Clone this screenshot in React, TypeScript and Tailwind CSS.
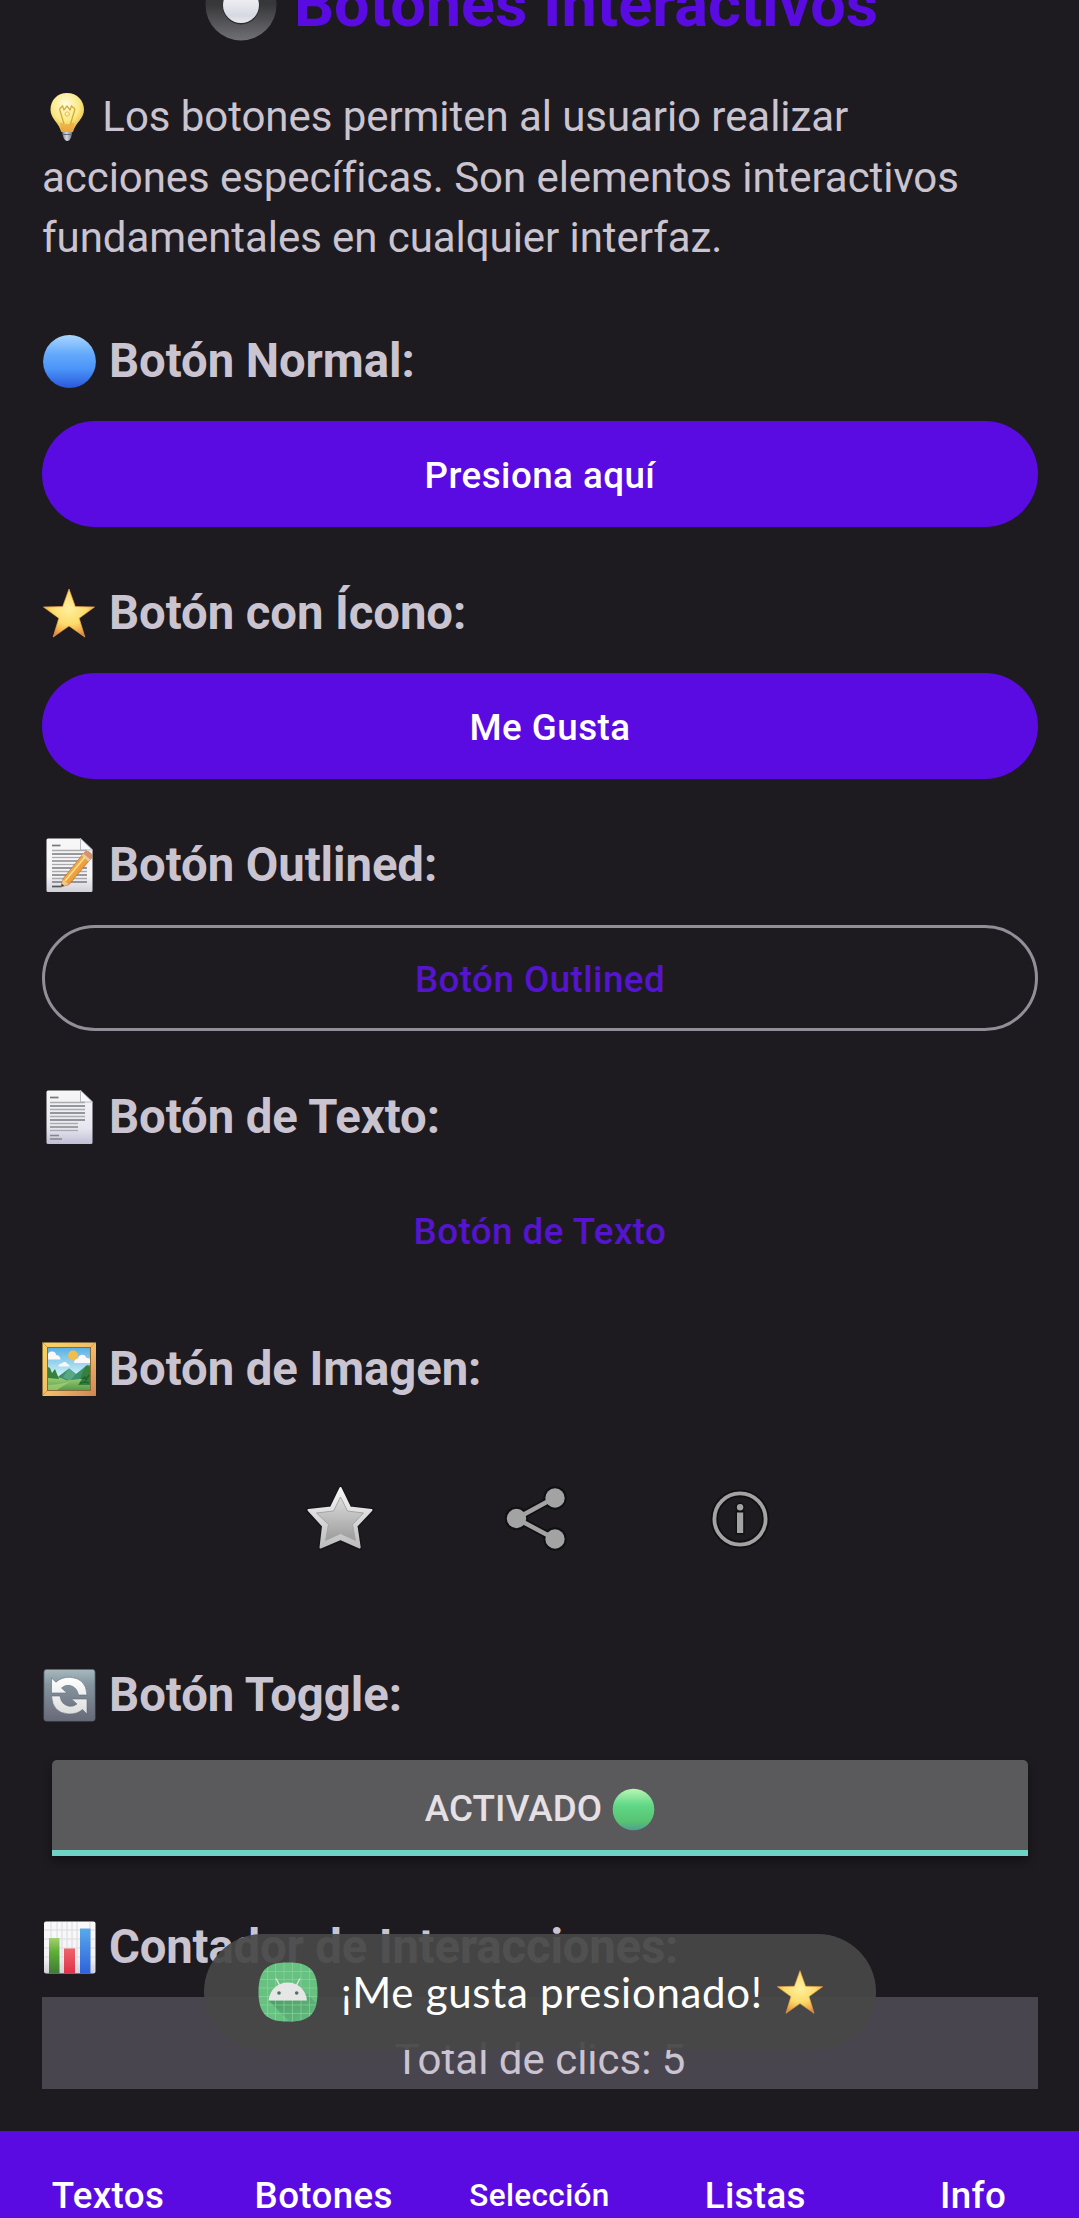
import type { ReactNode } from "react";

const STAR = "M27 3 L33.3 20.6 L52.5 21 L37.2 32.2 L42.8 51 L27 40 L11.2 51 L16.8 32.2 L1.5 21 L20.7 20.6 Z";

function BlueCircle() {
  return (
    <svg viewBox="0 0 54 54" className="size-[54px]">
      <defs>
        <linearGradient id="blue" x1="0" y1="0" x2="0" y2="1">
          <stop offset="0" stopColor="#a9d6ff" />
          <stop offset=".35" stopColor="#65aafb" />
          <stop offset=".65" stopColor="#4a93f8" />
          <stop offset="1" stopColor="#2a58da" />
        </linearGradient>
      </defs>
      <circle cx="27.500" cy="27.500" r="26.400" fill="url(#blue)" />
    </svg>
  );
}

function GoldStar({ id, className }: { id: string; className: string }) {
  return (
    <svg viewBox="0 0 54 54" className={className}>
      <defs>
        <radialGradient id={id} cx=".5" cy=".4" r=".62">
          <stop offset="0" stopColor="#fff0a0" />
          <stop offset=".55" stopColor="#fbdc6c" />
          <stop offset=".8" stopColor="#f2b14a" />
          <stop offset="1" stopColor="#dd7f4a" />
        </radialGradient>
      </defs>
      <path d={STAR} fill={`url(#${id})`} stroke="#e9a349" strokeWidth=".7" />
    </svg>
  );
}

function Page({ pencil }: { pencil?: boolean }) {
  const id = pencil ? "memo" : "page";
  const left = pencil ? 10 : 8;
  const rights = pencil ? [45, 43, 41, 39, 37, 45, 45, 45, 45, 45] : [43, 43, 43, 43, 43, 43, 36, 36, 36];
  return (
    <svg viewBox="0 0 54 54" className="size-[54px]">
      <defs>
        <linearGradient id={id} x1="0" y1="0" x2="0" y2="1">
          <stop offset="0" stopColor="#f7f7f8" />
          <stop offset=".7" stopColor={pencil ? "#f4f4f6" : "#e6e6ef"} />
          <stop offset="1" stopColor={pencil ? "#d0d0d8" : "#c0bfd4"} />
        </linearGradient>
        <linearGradient id="pencilBody" x1="0" y1="0" x2="1" y2="1">
          <stop offset="0" stopColor="#ffc861" />
          <stop offset="1" stopColor="#d97f22" />
        </linearGradient>
      </defs>
      <path d="M6 0.5 H39 L50.5 12 V52.5 Q50.5 54 49 54 H6 Q4.500 54 4.500 52.500 V2 Q4.500 .5 6 .5Z" fill={`url(#${id})`} />
      <path d="M38.500 .5 L50.500 12 H38.500Z" fill="#f8f8fa" stroke="#b9b9c0" strokeWidth="1" />
      <path d={`M${left} 7.500h8.500`} stroke="#77777c" strokeWidth="1.700" />
      {rights.map((r, i) => (
        <path key={i} d={`M${left} ${12.500 + i * 3.500}H${r}`} stroke={i % 2 ? "#77787e" : "#aaaaae"} strokeWidth="1.300" />
      ))}
      {pencil ? (
        <>
          <path d="M10 48.500h9" stroke="#55565c" strokeWidth="1.700" />
          <path d="M19 49 L20.800 41 L42 14.800 Q44 11.800 48 14.500 Q51 17 49.500 20 L27 46.500Z" fill="url(#pencilBody)" stroke="#b76a2c" strokeWidth=".7" />
          <path d="M41 16 L43 13.500 Q45.500 11.800 48.500 14.800 Q51 17.500 49.300 20.300 L47.600 22Z" fill="#d9936c" />
          <path d="M39.700 17.600 L41.300 15.600 L48.200 21.600 L46.600 23.600Z" fill="#e7c9a6" />
          <path d="M19 49 L20.800 41.500 L26.500 46.300Z" fill="#efc690" />
          <path d="M19 49 l.8-3.200 2.300 1.900Z" fill="#3d3530" />
          <path d="M23 43 L43 19" stroke="#ffe08f" strokeWidth="1.500" />
        </>
      ) : (
        <path d="M8 45.500h9 M8 49h12" stroke="#85858c" strokeWidth="1.600" />
      )}
    </svg>
  );
}

function Picture() {
  return (
    <svg viewBox="0 0 54 54" className="size-[54px]">
      <defs>
        <linearGradient id="frame" x1="0" y1="0" x2="1" y2="1">
          <stop offset="0" stopColor="#fbd45e" />
          <stop offset=".55" stopColor="#f0bb68" />
          <stop offset="1" stopColor="#cf8256" />
        </linearGradient>
        <linearGradient id="sky" x1="0" y1="0" x2="0" y2="1">
          <stop offset="0" stopColor="#58b0e4" />
          <stop offset=".6" stopColor="#c6ecf5" />
        </linearGradient>
        <linearGradient id="grass" x1="0" y1="0" x2="0" y2="1">
          <stop offset="0" stopColor="#a9d37c" />
          <stop offset="1" stopColor="#529c4a" />
        </linearGradient>
      </defs>
      <rect x=".5" y=".5" width="53.500" height="53.500" rx=".8" fill="url(#frame)" />
      <path d="M.5 .5 L6 6 M53.500 .5 L48 6 M.5 53.500 L6 48 M53.500 53.500 L48 48" stroke="#d98c43" strokeWidth=".8" />
      <rect x="5.500" y="5.500" width="43" height="43" fill="url(#sky)" stroke="#8b6a35" strokeWidth="1" />
      <circle cx="31" cy="13.500" r="5" fill="#f3bd4e" />
      <path d="M6 17.500V12q1-3 4-2.500 4 0 4 3.500 4 0 4.500 4.500Z" fill="#fbf8fa" />
      <path d="M32 21q0-4 4-4.500 1-4.500 6-3.500 2 1 2.500 3 3 0 3.500 1v4Z" fill="#fbf8fa" />
      <path d="M16.500 24.500q0-3 3-3 1-2 4-1.500 1.500 1 2 2 2 0 2.300 2.500Z" fill="#f7f8fb" />
      <path d="M13 37 L21 31 L27 26.500 L34 32 L44 24 L48 23V40H13Z" fill="#3d906c" />
      <path d="M27 26.500 L34 32 L28 39 L21 35Z" fill="#56a886" />
      <path d="M6 34 Q16 34 25 38.500 Q36 38 48 35V48H6Z" fill="url(#grass)" />
      <path d="M6 43q16-1 23-4 -8 5-14 9H6Z" fill="#b2d979" opacity=".6" />
      <path d="M6 36V25l2 1 2 5 3-4 4 10Z M36 43l4-6-2 0 5-12 2-2 3 2V43Z" fill="#35803a" />
      <path d="M40 37l3-2 1 3 3-5 M38 41l5-1 4 1" stroke="#1f6330" strokeWidth="1.500" fill="none" />
    </svg>
  );
}

function Refresh() {
  return (
    <svg viewBox="0 0 54 54" className="size-[54px]">
      <defs>
        <linearGradient id="tile" x1="0" y1="0" x2="0" y2="1">
          <stop offset="0" stopColor="#a7b9bf" />
          <stop offset=".3" stopColor="#84949e" />
          <stop offset="1" stopColor="#686879" />
        </linearGradient>
        <linearGradient id="arrowFill" gradientUnits="userSpaceOnUse" x1="0" y1="9" x2="0" y2="46">
          <stop offset="0" stopColor="#fff" />
          <stop offset="1" stopColor="#dededf" />
        </linearGradient>
      </defs>
      <rect x="2" y="1.500" width="51" height="51.500" rx="2.500" fill="url(#tile)" stroke="#5d6a73" strokeWidth=".8" />
      <g fill="url(#arrowFill)" stroke="#616c76" strokeWidth=".6">
        <path d="M9.500 10 V25 H25 L19.500 20 Q23 16.500 28 17.500 Q35 19 36.500 27 H45 Q44 10 28 9.200 Q19.500 9 14 14.200Z" />
        <path d="M45 46 V31 H29.500 L35 36 Q31.500 39 27 38.200 Q19 36.500 18 28 H9.500 Q10.500 45 26.500 46 Q35 46.300 40.500 41.500Z" />
      </g>
    </svg>
  );
}

function BarChart() {
  return (
    <svg viewBox="0 0 54 54" className="size-[54px]">
      <defs>
        <linearGradient id="sheet" x1="0" y1="0" x2="0" y2="1">
          <stop offset="0" stopColor="#fafafa" />
          <stop offset=".7" stopColor="#f3f3f6" />
          <stop offset="1" stopColor="#cfced8" />
        </linearGradient>
        <linearGradient id="green" x1="0" y1="0" x2="0" y2="1">
          <stop offset="0" stopColor="#a4d06e" />
          <stop offset=".4" stopColor="#5eae36" />
          <stop offset="1" stopColor="#3f7a36" />
        </linearGradient>
        <linearGradient id="red" x1="0" y1="0" x2="0" y2="1">
          <stop offset="0" stopColor="#f0636a" />
          <stop offset="1" stopColor="#dc3348" />
        </linearGradient>
        <linearGradient id="barBlue" x1="0" y1="0" x2="0" y2="1">
          <stop offset="0" stopColor="#58a9ea" />
          <stop offset="1" stopColor="#2f62dc" />
        </linearGradient>
      </defs>
      <rect x="2" y="1.500" width="51.500" height="52" rx="2" fill="url(#sheet)" />
      <path d="M2 10H53M2 19H53M2 28H53M2 37H53M2 46H53M9 2V53M15 2V53M20 2V53M25 2V53M30 2V53M35 2V53M48 2V53" stroke="#dadae0" strokeWidth="1" />
      <rect x="7" y="18" width="10.500" height="35.500" fill="url(#green)" />
      <rect x="22" y="28.500" width="11" height="25" fill="url(#red)" />
      <rect x="38" y="8.500" width="10.500" height="45" fill="url(#barBlue)" />
    </svg>
  );
}

function Bulb() {
  return (
    <svg viewBox="0 0 50 50" className="inline-block size-[50px] align-[-11px]">
      <defs>
        <radialGradient id="glass" cx=".45" cy=".3" r=".75">
          <stop offset="0" stopColor="#fffce0" />
          <stop offset=".55" stopColor="#fbe983" />
          <stop offset="1" stopColor="#e2a52e" />
        </radialGradient>
        <linearGradient id="screw" x1="0" y1="0" x2="1" y2="0">
          <stop offset="0" stopColor="#7d7f88" />
          <stop offset=".45" stopColor="#d4d7e0" />
          <stop offset="1" stopColor="#6b6d78" />
        </linearGradient>
      </defs>
      <path d="M20 39h10.500l-1.500 6.500q-1.500 3.500-3.700 3.500t-3.800-3.500Z" fill="url(#screw)" />
      <path d="M20.500 42.500h9.500" stroke="#676a75" strokeWidth="1" />
      <path d="M25 1C15 1 8.500 8.500 8.500 17.500 8.500 25 14 29 17 34.500Q18.500 37.500 19.300 40H31Q31.500 37.500 33.300 34.500C36.500 29 42 25 42 17.500 42 8.500 35 1 25 1Z" fill="url(#glass)" />
      <path d="M18 30.500Q25 34 32.500 30.500L30.800 40H19.500Z" fill="#e9a53a" opacity=".65" />
      <path d="M17.500 17l4.500 15M33 17l-4.500 15M17.500 17l3-3 1.500 4 3-4 3 4 1.500-4 3.500 3" stroke="#d2ab3b" strokeWidth="1.300" fill="none" />
      <circle cx="25.200" cy="22" r="2.200" fill="none" stroke="#e0bd50" strokeWidth="1" />
    </svg>
  );
}

function RadioKnob() {
  return (
    <svg viewBox="0 0 72 72" className="size-[72px] shrink-0">
      <defs>
        <linearGradient id="ring" x1="0" y1="0" x2="0" y2="1">
          <stop offset="0" stopColor="#2b2b2e" />
          <stop offset=".5" stopColor="#38383b" />
          <stop offset="1" stopColor="#707175" />
        </linearGradient>
        <linearGradient id="knob" x1="0" y1="0" x2="0" y2="1">
          <stop offset="0" stopColor="#fff" />
          <stop offset=".8" stopColor="#d6d9e2" />
          <stop offset="1" stopColor="#e9eaee" />
        </linearGradient>
      </defs>
      <circle cx="36" cy="36" r="35.500" fill="url(#ring)" />
      <circle cx="36" cy="37" r="18.500" fill="#1f1f22" opacity=".75" />
      <circle cx="36" cy="36" r="18" fill="url(#knob)" />
    </svg>
  );
}

function GreenCircle() {
  return (
    <svg viewBox="0 0 44 44" className="size-[43px]">
      <defs>
        <linearGradient id="mint" x1="0" y1="0" x2="0" y2="1">
          <stop offset="0" stopColor="#b9f6b4" />
          <stop offset=".4" stopColor="#60d886" />
          <stop offset=".8" stopColor="#57c272" />
          <stop offset="1" stopColor="#4f9d94" />
        </linearGradient>
      </defs>
      <circle cx="22" cy="22" r="21.300" fill="url(#mint)" />
    </svg>
  );
}

function SilverStar() {
  return (
    <svg viewBox="0 0 84 84" className="size-[84px]">
      <defs>
        <linearGradient id="edge" x1="0" y1="0" x2="0" y2="1">
          <stop offset="0" stopColor="#f6f6f6" />
          <stop offset="1" stopColor="#bdbdbd" />
        </linearGradient>
        <linearGradient id="core" x1="0" y1="0" x2="0" y2="1">
          <stop offset="0" stopColor="#dcdcdc" />
          <stop offset="1" stopColor="#9c9c9c" />
        </linearGradient>
      </defs>
      <path d="M42.500 11.500L52 31.500L74 33L58 49.500L62 71L42.500 62L22.500 71L25.500 49.500L10 33L32.500 31.500Z" fill="#111114" stroke="#111114" strokeWidth="5" strokeLinejoin="round" opacity=".55" />
      <path d="M42.500 11L52 30.500L73.500 33L58.500 49L61.700 70.500L42.500 62L22.500 70.500L25 49L10.500 33L33 30.500Z" fill="url(#edge)" stroke="url(#edge)" strokeWidth="2" strokeLinejoin="round" />
      <path d="M42.500 20L49.500 34L65.500 36L54.500 47.500L57.500 63.500L42.500 56.500L27.500 63.500L30.500 47.500L18.500 36L35.500 34Z" fill="url(#core)" stroke="#a5a5a5" strokeWidth="1" />
    </svg>
  );
}

function ShareIcon() {
  return (
    <svg viewBox="0 0 84 84" className="size-[84px]">
      {["#101013", "#a3a3a3"].map((color, i) => (
        <g key={color} fill={color} stroke={color}>
          <path d="M57 20.500L18.500 41.500L57 62" fill="none" strokeWidth={i ? 4.500 : 8} />
          <g strokeWidth={i ? 0 : 4}>
            <circle cx="57" cy="21" r="9.700" />
            <circle cx="18.500" cy="41.500" r="9.700" />
            <circle cx="57" cy="62" r="9.700" />
          </g>
        </g>
      ))}
    </svg>
  );
}

function InfoIcon() {
  return (
    <svg viewBox="0 0 84 84" className="size-[84px]">
      <circle cx="42" cy="42" r="25.600" fill="none" stroke="#101013" strokeWidth="7.500" />
      <circle cx="42" cy="42" r="25.600" fill="none" stroke="#a3a3a3" strokeWidth="3.800" />
      <path d="M39 35.500h6.200V56H39Z" fill="#a3a3a3" stroke="#101013" strokeWidth="3" paintOrder="stroke" />
      <circle cx="42.100" cy="30.300" r="3.200" fill="#a3a3a3" stroke="#101013" strokeWidth="3" paintOrder="stroke" />
    </svg>
  );
}

function AndroidIcon() {
  return (
    <svg viewBox="0 0 60 60" className="size-[60px] shrink-0">
      <defs>
        <clipPath id="squircle">
          <path d="M30 .5C48 .5 59.500 5 59.500 30S48 59.500 30 59.500.5 55 .5 30 12 .5 30 .5Z" />
        </clipPath>
        <linearGradient id="shade" x1="0" y1="0" x2=".8" y2="1">
          <stop offset="0" stopColor="#418a5b" />
          <stop offset="1" stopColor="#62b87d" />
        </linearGradient>
      </defs>
      <g clipPath="url(#squircle)">
        <path d="M0 0H60V60H0Z" fill="#67c180" />
        <path d="M10.500 38.500L32 60H60V43L48.500 31.500 49 38.500Z" fill="url(#shade)" opacity=".75" />
        <path d="M0 9.500H60M0 17.500H60M0 26H60M0 34.500H60M0 43H60M0 51.500H60M9.500 0V60M17.500 0V60M26 0V60M34.500 0V60M43 0V60M51.500 0V60" stroke="#92d6a3" strokeWidth=".6" />
        <path d="M18 16.500L22 24M42 16.500L38 24" stroke="#e8e8e8" strokeWidth="1.300" />
        <path d="M10.500 38.500C12 27 20 20.500 29.800 20.500S47.500 27 49 38.500Z" fill="#e6e6e6" />
        <circle cx="21" cy="31" r="1.800" fill="#4c7059" />
        <circle cx="38.700" cy="31" r="1.800" fill="#4c7059" />
      </g>
    </svg>
  );
}

function Heading({ icon, tracking = "", children }: { icon: ReactNode; tracking?: string; children: ReactNode }) {
  return (
    <h2 className={`flex h-[60px] items-center gap-[13px] text-[47.25px] leading-[60px] font-bold whitespace-nowrap ${tracking}`}>
      {icon}
      <span>{children}</span>
    </h2>
  );
}

function Section({ icon, title, children }: { icon: ReactNode; title: string; children: ReactNode }) {
  return (
    <section className="flex flex-col gap-[30px]">
      <Heading icon={icon} tracking="tracking-[-0.06px]">{title}</Heading>
      {children}
    </section>
  );
}

const BUTTON = "flex h-[106px] w-full items-center justify-center rounded-full pt-[3px] text-[36.75px] font-medium tracking-[0.45px]";

const TABS = [
  { label: "Textos", size: "text-[36.75px]" },
  { label: "Botones", size: "text-[36.75px]" },
  { label: "Selección", size: "text-[31.5px]" },
  { label: "Listas", size: "text-[36.75px]" },
  { label: "Info", size: "text-[36.75px] pl-1" },
];

export default function App() {
  return (
    <div className="relative flex h-[2218px] w-[1079px] flex-col overflow-hidden bg-[#1d1b20] font-['Roboto',sans-serif] text-[#cac4d0]">
      <main className="-mt-8 flex h-[2163px] shrink-0 flex-col pr-[41px] pl-[42px]">
        <h1 className="flex h-[74px] items-center justify-center gap-[17px] pl-[3px] text-[63px] leading-[74px] font-bold whitespace-nowrap text-[#5a0be2]">
          <RadioKnob />
          <span>Botones Interactivos</span>
        </h1>
        <p className="mt-[45px] h-[181px] text-[42px] leading-[60.5px] tracking-[-0.06px] whitespace-nowrap">
          <Bulb /> Los botones permiten al usuario realizar
          <br />
          acciones específicas. Son elementos interactivos
          <br />
          fundamentales en cualquier interfaz.
        </p>

        <div className="mt-[63px] flex flex-col gap-14">
          <Section icon={<BlueCircle />} title="Botón Normal:">
            <button className={`${BUTTON} bg-[#5a0be2] text-white`}>Presiona aquí</button>
          </Section>
          <Section icon={<GoldStar id="headingStar" className="size-[54px]" />} title="Botón con Ícono:">
            <button className={`${BUTTON} bg-[#5a0be2] pl-5 text-white`}>Me Gusta</button>
          </Section>
          <Section icon={<Page pencil />} title="Botón Outlined:">
            <button className={`${BUTTON} border-[3px] border-[#938f99] text-[#5514ce]`}>Botón Outlined</button>
          </Section>
          <Section icon={<Page />} title="Botón de Texto:">
            <button className={`${BUTTON} text-[#5514ce]`}>Botón de Texto</button>
          </Section>
          <Section icon={<Picture />} title="Botón de Imagen:">
            <div className="flex h-[180px] items-center justify-center gap-[116px]">
              <SilverStar />
              <ShareIcon />
              <InfoIcon />
            </div>
          </Section>
        </div>

        <div className="mt-14 flex flex-col">
          <Heading icon={<Refresh />}>Botón Toggle:</Heading>
          <button className="mx-2.5 mt-[35px] flex h-24 items-center justify-center gap-2.5 rounded-t-[5px] border-b-[6px] border-[#6ed3c4] bg-[#5a5a5c] pt-2 text-[36.75px] font-medium tracking-[0.15px] text-[#e6e0e5] shadow-[0_5px_10px_rgba(0,0,0,0.4)]">
            <span>ACTIVADO</span>
            <GreenCircle />
          </button>
        </div>

        <div className="mt-[61px] flex flex-col gap-5">
          <Heading icon={<BarChart />} tracking="tracking-[-0.15px]">Contador de Interacciones:</Heading>
          <div className="flex h-[92px] items-center justify-center bg-[#49454f] pt-[33px] text-[42px] leading-[50px]">Total de clics: 5</div>
        </div>
      </main>

      <nav className="grid h-[87px] shrink-0 grid-cols-5 bg-[#5a0be2] pt-[43px] text-center font-medium text-white">
        {TABS.map((tab) => (
          <a key={tab.label} className={`${tab.size} leading-[44px] tracking-[0.35px]`}>
            {tab.label}
          </a>
        ))}
      </nav>

      <div className="absolute top-[1934px] left-[204px] flex h-[116px] w-[672px] items-center rounded-[58px] bg-[#474747]/93 pl-[54px] font-['Lato','Roboto',sans-serif] text-[42px] tracking-[0.7px] whitespace-nowrap text-white">
        <AndroidIcon />
        <span className="ml-[23px]">¡Me gusta presionado!</span>
        <GoldStar id="toastStar" className="ml-[13px] size-12 shrink-0" />
      </div>
    </div>
  );
}
